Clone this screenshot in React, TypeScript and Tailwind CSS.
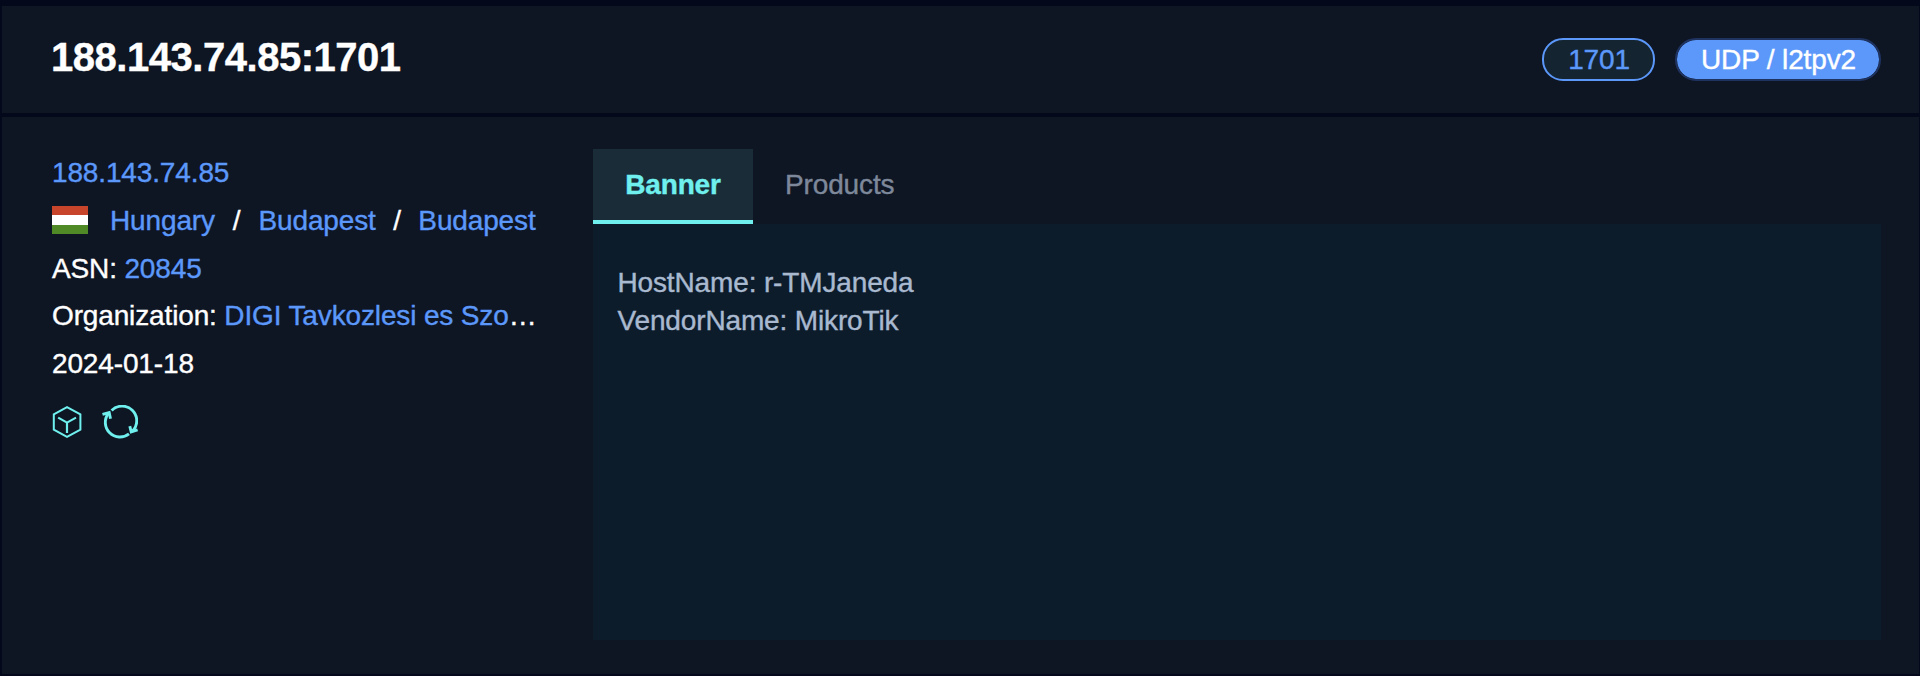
import React from "react";

const link = "text-[#5b98fa]";

function CubeIcon() {
  return (
    <svg width="30" height="34" viewBox="0 0 30 34" fill="none" stroke="#6ff0ee" strokeWidth="2">
      <path d="M15 2.2 28.4 9.4V24.6L15 31.8 1.8 24.6V9.4Z" />
      <path strokeWidth="2.2" d="M6.2 12.6 15 17.6 24 12.6M15 17.6V28" />
    </svg>
  );
}

function RefreshIcon() {
  return (
    <svg width="36" height="34" viewBox="0 0 36 34" fill="none" stroke="#6ff0ee" strokeWidth="2.9">
      <path d="M9.6 5.6A14.6 14.6 0 0 1 30.6 26" />
      <path d="M27 28.8A14.6 14.6 0 0 1 6.4 8.4" />
      <path d="M.5 9.4 7.2 7.6 8.5 13.8" />
      <path d="M27.8 21.2 29.2 26.8 35.6 24.8" />
    </svg>
  );
}

function Flag() {
  return (
    <span className="flex h-7 w-9 flex-col">
      <span className="flex-1 bg-[#c7452a]" />
      <span className="flex-1 bg-white" />
      <span className="flex-1 bg-[#4f8a27]" />
    </span>
  );
}

export default function App() {
  return (
    <div className="flex h-[676px] w-[1920px] flex-col gap-1 bg-[#03081b] pt-1.5 pr-px pb-0.5 pl-0.5 font-['Liberation_Sans',Arial,sans-serif] text-[28px] tracking-[-0.14px] text-white [-webkit-text-stroke:0.4px_currentColor]">
      <header className="flex h-[107px] shrink-0 items-start justify-between bg-[#0e1523] pr-[38px] pl-[49px]">
        <h1 className="mt-[27px] text-[40px] leading-[48px] font-bold tracking-[-0.47px]">188.143.74.85:1701</h1>
        <div className="mt-8 flex gap-5">
          <span className="flex h-[43px] w-[113px] items-center justify-center rounded-[21px] border-2 border-[#5b98fa] bg-[#142430] pl-px leading-none text-[#5b98fa]">
            1701
          </span>
          <span className="flex h-[43px] w-[206px] items-center justify-center rounded-[21px] border-2 border-[#1f3361] bg-[#5b98fa] bg-clip-padding pl-px leading-none">
            UDP / l2tpv2
          </span>
        </div>
      </header>

      <main className="flex min-h-0 flex-1 bg-[#0e1523] pr-[38px] pl-[50px]">
        <section className="flex w-[541px] shrink-0 flex-col pt-8 leading-[48px]">
          <a className={link}>188.143.74.85</a>
          <div className="flex h-12 items-center whitespace-pre">
            <span className="-mt-0.5">
              <Flag />
            </span>
            <a className="ml-[22px] text-[#5b98fa]">Hungary</a>
            <span className="mx-[18px]">/</span>
            <a className={link}>Budapest</a>
            <span className="mx-[17.5px]">/</span>
            <a className={link}>Budapest</a>
          </div>
          <div>
            ASN: <a className={link}>20845</a>
          </div>
          <div className="h-[47px] leading-[46px] whitespace-nowrap">
            Organization: <a className={link}>DIGI Tavkozlesi es Szo</a>…
          </div>
          <div>2024-01-18</div>
          <div className="mt-[17px] flex gap-5">
            <CubeIcon />
            <RefreshIcon />
          </div>
        </section>

        <section className="flex flex-1 flex-col pt-8">
          <nav className="flex h-[75px] shrink-0">
            <button className="flex w-40 justify-center border-b-4 border-[#6ff0ee] bg-[#1b2c39] font-bold text-[#6ff0ee]">
              <span className="mt-5 leading-8">Banner</span>
            </button>
            <button className="flex px-8 text-[#7d889a]">
              <span className="mt-5 leading-8">Products</span>
            </button>
          </nav>
          <div className="h-[416px] bg-[#0c1c2b] pt-10 pr-6 pl-[24.5px] leading-[38px] text-[#a9b9cf]">
            <p>HostName: r-TMJaneda</p>
            <p>VendorName: MikroTik</p>
          </div>
        </section>
      </main>
    </div>
  );
}
